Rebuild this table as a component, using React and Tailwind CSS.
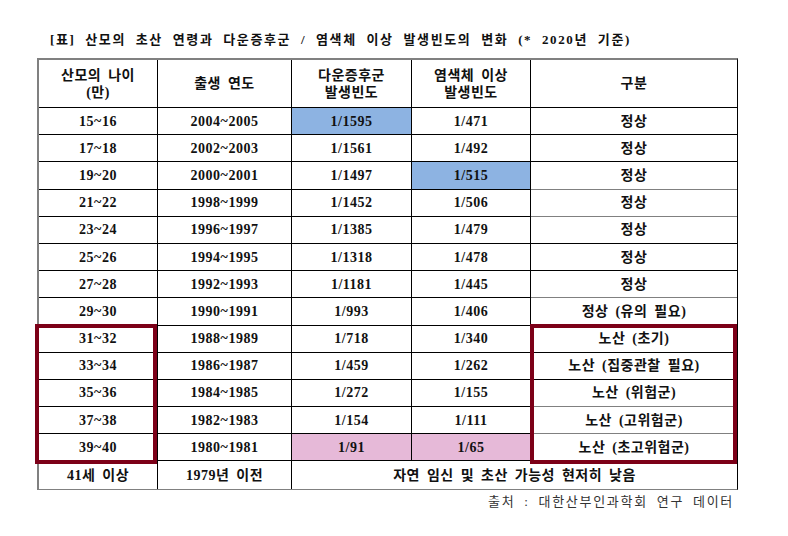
const rows = [
  ["15~16", "2004~2005", "1/1595", "1/471", "정상"],
  ["17~18", "2002~2003", "1/1561", "1/492", "정상"],
  ["19~20", "2000~2001", "1/1497", "1/515", "정상"],
  ["21~22", "1998~1999", "1/1452", "1/506", "정상"],
  ["23~24", "1996~1997", "1/1385", "1/479", "정상"],
  ["25~26", "1994~1995", "1/1318", "1/478", "정상"],
  ["27~28", "1992~1993", "1/1181", "1/445", "정상"],
  ["29~30", "1990~1991", "1/993", "1/406", "정상 (유의 필요)"],
  ["31~32", "1988~1989", "1/718", "1/340", "노산 (초기)"],
  ["33~34", "1986~1987", "1/459", "1/262", "노산 (집중관찰 필요)"],
  ["35~36", "1984~1985", "1/272", "1/155", "노산 (위험군)"],
  ["37~38", "1982~1983", "1/154", "1/111", "노산 (고위험군)"],
  ["39~40", "1980~1981", "1/91", "1/65", "노산 (초고위험군)"],
]

// which row bottoms are black vs gray in the source sheet
const blackLine = [true, true, false, false, true, true, false, false, true, true, false, false, true]

// [row, col] -> fill
const fills = {
  "0-2": "bg-[#8db3e2]",
  "2-3": "bg-[#8db3e2]",
  "12-2": "bg-[#e6b9d8]",
  "12-3": "bg-[#e6b9d8]",
}

const Cell = ({ children, last, line, fill, tall }) => {
  const border = line === "black" ? "border-b border-black" : line === "gray" ? "border-b border-[#808080]" : ""
  return (
    <div
      className={`flex items-center justify-center text-center ${tall ? "h-[48px] leading-[17px]" : "h-[27.2px]"} ${last ? "" : "border-r border-black"} ${border} ${fill || ""}`}
    >
      {children}
    </div>
  )
}

const App = () => {
  return (
    <div className="w-[788px] h-[536px] bg-white pt-[32px] text-[#111] font-['Liberation_Serif','Noto_Sans_CJK_KR',serif]">
      <div className="pl-[50px] h-[16px] leading-[16px] text-[13px] font-bold tracking-[1.6px] [word-spacing:5px]">
        [표] 산모의 초산 연령과 다운증후군 / 염색체 이상 발생빈도의 변화 (* 2020년 기준)
      </div>

      <div className="relative ml-[37px] mt-[10px] w-[701px] border-t-2 border-l-2 border-r border-b border-t-[#808080] border-l-[#808080] border-r-black border-b-[#808080] text-[14px] font-bold tracking-[0.5px] [word-spacing:3px]">
        <div className="grid grid-cols-[119px_134px_120px_119px_206px]">
          <Cell tall line="black">산모의 나이<br />(만)</Cell>
          <Cell tall line="black">출생 연도</Cell>
          <Cell tall line="black">다운증후군<br />발생빈도</Cell>
          <Cell tall line="black">염색체 이상<br />발생빈도</Cell>
          <Cell tall last line="black">구분</Cell>

          {rows.map((row, i) =>
            row.map((val, j) => (
              <Cell
                key={`${i}-${j}`}
                last={j === 4}
                line={blackLine[i] ? "black" : "gray"}
                fill={fills[`${i}-${j}`]}
              >
                {val}
              </Cell>
            ))
          )}

          <Cell>41세 이상</Cell>
          <Cell>1979년 이전</Cell>
          <div className="col-span-3 h-[27.2px] flex items-center justify-center">
            자연 임신 및 초산 가능성 현저히 낮음
          </div>
        </div>

        {/* highlight boxes */}
        <div className="absolute left-[-4px] top-[264px] w-[122px] h-[140px] border-4 border-[#7c0018]"></div>
        <div className="absolute left-[491px] top-[264px] w-[207px] h-[140px] border-4 border-[#7c0018]"></div>
      </div>

      <div className="mt-[4px] pr-[54px] text-right text-[13px] leading-[16px] text-[#333] tracking-[1.7px] [word-spacing:4px]">
        출처 : 대한산부인과학회 연구 데이터
      </div>
    </div>
  )
}

export default App
